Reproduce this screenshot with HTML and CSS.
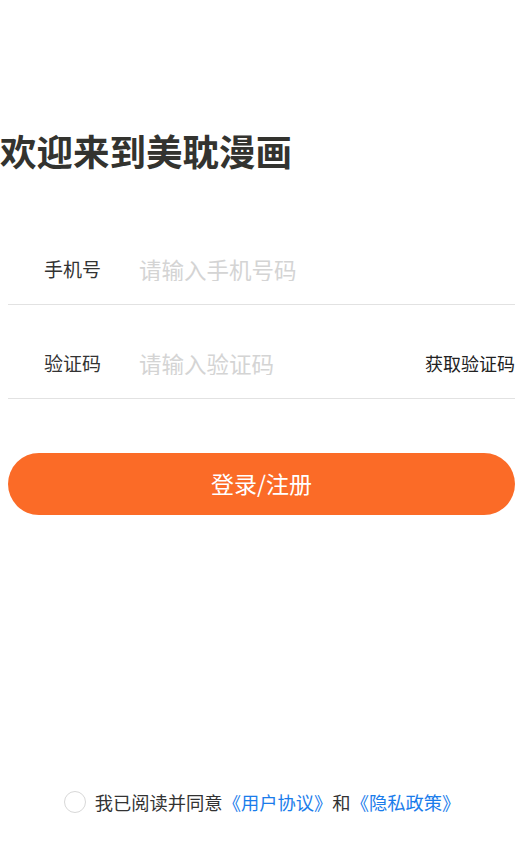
FILE: index.html
```html
<!DOCTYPE html>
<html lang="zh-CN">

<head>
	<meta charset="UTF-8" />
	<meta name="viewport" content="width=device-width, initial-scale=1.0" />
	<title>欢迎来到美耽漫画</title>
	<link rel="stylesheet" href="styles.css">
</head>

<body>
	<div class="page">
		<h1 class="title">欢迎来到美耽漫画</h1>

		<div class="login_form">
			<div class="field_row">
				<label class="field_label" for="phone">手机号</label>
				<input class="field_input" type="text" id="phone" placeholder="请输入手机号码" />
			</div>
			<div class="field_row">
				<label class="field_label" for="code">验证码</label>
				<input class="field_input" type="text" id="code" placeholder="请输入验证码" />
				<span class="get_code">获取验证码</span>
			</div>

			<button class="login_button">登录/注册</button>
		</div>

		<div class="agreement">
			<span class="check_circle"></span>
			<span class="agreement_text">我已阅读并同意<a class="link">《用户协议》</a>和<a class="link">《隐私政策》</a></span>
		</div>
	</div>
</body>

</html>
```

FILE: styles.css
```css
body {
	margin: 0;
	background-color: #fff;
	font-family: "Noto Sans CJK SC", "Noto Sans", sans-serif;
	color: #333;
}

.page {
	display: flex;
	flex-direction: column;
	min-height: 866px;
	box-sizing: border-box;
}

.title {
	margin: 132px 0 0 0;
	font-size: 36.5px;
	line-height: 38px;
	font-weight: bold;
	color: #33332f;
}

.login_form {
	display: flex;
	flex-direction: column;
	margin: 41px 13px 0 8px;
}

.field_row {
	display: flex;
	align-items: center;
	padding: 46px 0 23px 0;
	line-height: 24px;
	border-bottom: 1px solid #e2e2e2;
}

.field_label {
	width: 95px;
	padding-left: 36px;
	font-size: 19px;
	color: #333;
	flex-shrink: 0;
}

.field_input {
	flex: 1;
	min-width: 0;
	border: none;
	outline: none;
	padding: 0;
	font-family: inherit;
	font-size: 22.5px;
	line-height: 24px;
	height: 24px;
	color: #333;
	background: transparent;
}

.field_input::placeholder {
	color: #d4d4d4;
}

.get_code {
	font-size: 18px;
	color: #222;
	flex-shrink: 0;
}

.login_button {
	margin-top: 54px;
	height: 62px;
	border: none;
	border-radius: 31px;
	background-color: #fb6b27;
	color: #fff;
	font-family: inherit;
	font-size: 23px;
	line-height: 28px;
	padding-bottom: 3px;
}

.agreement {
	display: flex;
	align-items: center;
	justify-content: center;
	margin: auto 13px 0 8px;
	padding-bottom: 53px;
	padding-left: 1px;
}

.check_circle {
	width: 20px;
	height: 20px;
	border: 1px solid #d8d8d8;
	border-radius: 50%;
	margin-right: 9px;
}

.agreement_text {
	font-size: 18.3px;
	line-height: 22px;
	color: #333;
}

.link {
	color: #1a7ceb;
}
```
